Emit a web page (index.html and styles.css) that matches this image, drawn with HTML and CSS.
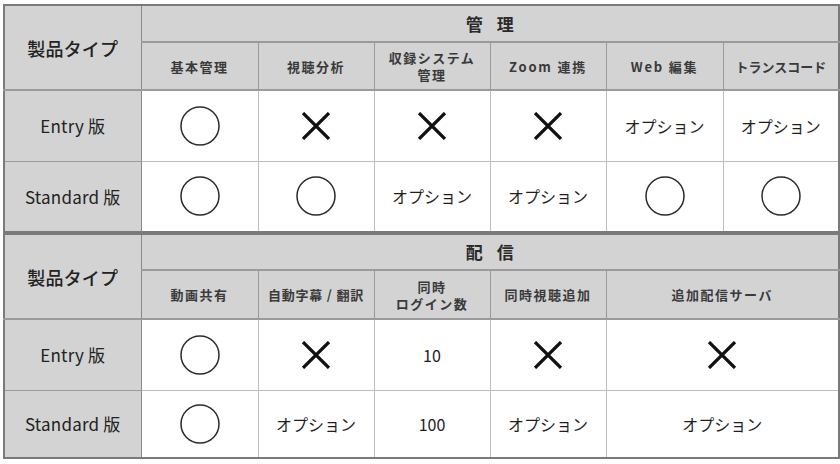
FILE: index.html
```html
<!DOCTYPE html>
<html lang="ja">
<head>
<meta charset="utf-8">
<link rel="stylesheet" href="styles.css">
</head>
<body>
<div class="sheet">
  <table class="grid sec1">
    <colgroup>
      <col class="c-label"><col class="c-a"><col class="c-b"><col class="c-b"><col class="c-b"><col class="c-a"><col class="c-b">
    </colgroup>
    <tr class="h1">
      <th class="label" rowspan="2">製品タイプ</th>
      <th class="group" colspan="6"><span>管</span><span>理</span></th>
    </tr>
    <tr class="h2">
      <th>基本管理</th>
      <th>視聴分析</th>
      <th class="two">収録システム<br>管理</th>
      <th class="latin">Zoom 連携</th>
      <th class="latin">Web 編集</th>
      <th class="tight">トランスコード</th>
    </tr>
    <tr class="row">
      <th class="label">Entry 版</th>
      <td><svg class="ok" viewBox="0 0 40 40"><circle cx="20" cy="20" r="19"/></svg></td>
      <td><svg class="ng" viewBox="0 0 30 28"><path d="M2 1 L28 27 M28 1 L2 27"/></svg></td>
      <td><svg class="ng" viewBox="0 0 30 28"><path d="M2 1 L28 27 M28 1 L2 27"/></svg></td>
      <td><svg class="ng" viewBox="0 0 30 28"><path d="M2 1 L28 27 M28 1 L2 27"/></svg></td>
      <td>オプション</td>
      <td>オプション</td>
    </tr>
    <tr class="row">
      <th class="label">Standard 版</th>
      <td><svg class="ok" viewBox="0 0 40 40"><circle cx="20" cy="20" r="19"/></svg></td>
      <td><svg class="ok" viewBox="0 0 40 40"><circle cx="20" cy="20" r="19"/></svg></td>
      <td>オプション</td>
      <td>オプション</td>
      <td><svg class="ok" viewBox="0 0 40 40"><circle cx="20" cy="20" r="19"/></svg></td>
      <td><svg class="ok" viewBox="0 0 40 40"><circle cx="20" cy="20" r="19"/></svg></td>
    </tr>
  </table>
  <table class="grid sec2">
    <colgroup>
      <col class="c-label"><col class="c-a"><col class="c-b"><col class="c-b"><col class="c-b"><col class="c-a"><col class="c-b">
    </colgroup>
    <tr class="h1">
      <th class="label" rowspan="2">製品タイプ</th>
      <th class="group" colspan="6"><span>配</span><span>信</span></th>
    </tr>
    <tr class="h2">
      <th>動画共有</th>
      <th class="slash">自動字幕 / 翻訳</th>
      <th class="two">同時<br>ログイン数</th>
      <th>同時視聴追加</th>
      <th colspan="2">追加配信サーバ</th>
    </tr>
    <tr class="row">
      <th class="label">Entry 版</th>
      <td><svg class="ok" viewBox="0 0 40 40"><circle cx="20" cy="20" r="19"/></svg></td>
      <td><svg class="ng" viewBox="0 0 30 28"><path d="M2 1 L28 27 M28 1 L2 27"/></svg></td>
      <td class="num">10</td>
      <td><svg class="ng" viewBox="0 0 30 28"><path d="M2 1 L28 27 M28 1 L2 27"/></svg></td>
      <td colspan="2"><svg class="ng" viewBox="0 0 30 28"><path d="M2 1 L28 27 M28 1 L2 27"/></svg></td>
    </tr>
    <tr class="row last">
      <th class="label">Standard 版</th>
      <td><svg class="ok" viewBox="0 0 40 40"><circle cx="20" cy="20" r="19"/></svg></td>
      <td>オプション</td>
      <td class="num">100</td>
      <td>オプション</td>
      <td colspan="2">オプション</td>
    </tr>
  </table>
</div>
</body>
</html>
```

FILE: styles.css
```css
html, body {
  margin: 0;
  padding: 0;
  background: #ffffff;
}
body {
  padding: 4px 0 0 3px;
  font-family: "Noto Sans CJK JP", "Noto Sans", sans-serif;
  color: #1e1e1e;
}
.sheet {
  width: 836px;
}
.grid {
  width: 836px;
  border-collapse: collapse;
  table-layout: fixed;
  border: 2px solid #7a7a7a;
}
.c-label { width: 137px; }
.c-a { width: 117px; }
.c-b { width: 116px; }

.grid th, .grid td {
  padding: 0;
  text-align: center;
  vertical-align: middle;
  border: 1px solid #bdbdbd;
}
.grid th {
  background: #d3d3d3;
  border-color: #9a9a9a;
  font-weight: 400;
}
.h1 { height: 37px; }
.h2 { height: 48px; }
.sec2 .h1 { height: 36px; }
.sec2 .h2 { height: 49px; }
.row { height: 71px; }
.row.last { height: 68px; }

.h1 th, .h2 th {
  border-bottom: 2px solid #9a9a9a;
}
.h1 .group {
  font-size: 17px;
  font-weight: 700;
  line-height: 20px;
  color: #2a2a2a;
}
.group span {
  display: inline-block;
  margin: 0 7px;
}
.label {
  font-size: 17px;
  font-weight: 400;
  letter-spacing: 0.2px;
  color: #222;
}
.h1 .label {
  font-size: 18px;
  font-weight: 500;
  border-right: 1px solid #8a8a8a;
}
.h2 th {
  font-size: 13px;
  font-weight: 700;
  letter-spacing: 1.5px;
  line-height: 15px;
  color: #3a3a3a;
}
.h2 th.two {
  line-height: 17px;
}
.h2 th.latin {
  letter-spacing: 1.8px;
}
.h2 th.tight {
  letter-spacing: 0;
}
.h2 th.slash {
  letter-spacing: 0.8px;
}
.row th.label {
  border-right: 1px solid #8a8a8a;
}
.grid td {
  font-size: 16px;
  font-weight: 400;
  color: #1e1e1e;
}
.ok {
  width: 40px;
  height: 40px;
  display: block;
  margin: 0 auto;
  fill: none;
  stroke: #2a2a2a;
  stroke-width: 1.5;
}
.ng {
  width: 30px;
  height: 28px;
  display: block;
  margin: 0 auto;
  fill: none;
  stroke: #111111;
  stroke-width: 3.2;
}
```
